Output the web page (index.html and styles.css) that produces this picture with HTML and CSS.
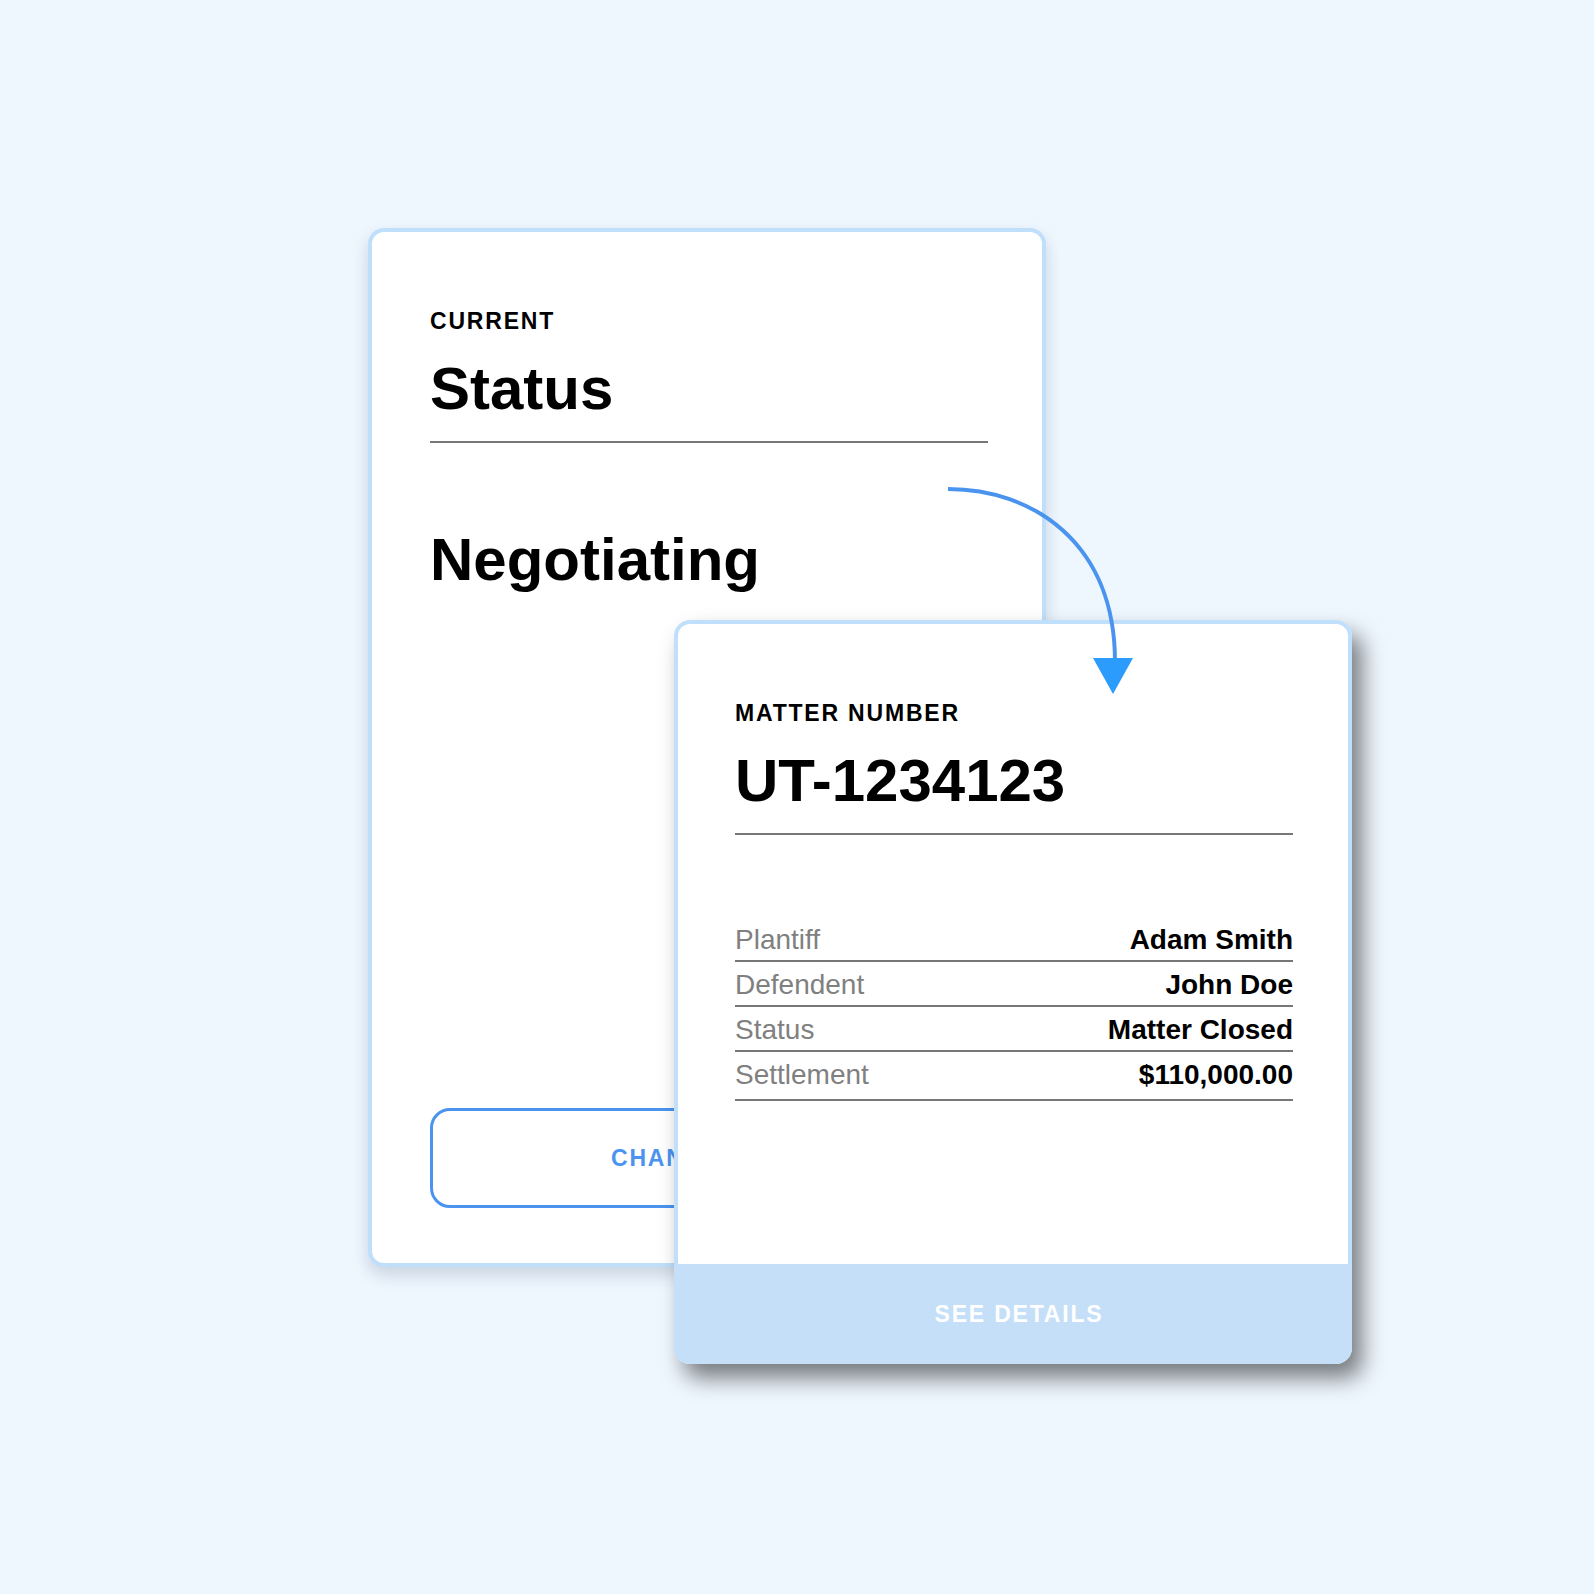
FILE: index.html
```html
<!DOCTYPE html>
<html lang="en">
<head>
  <meta charset="UTF-8" />
  <title>Matter Status</title>
  <meta name="viewport" content="width=device-width, initial-scale=1.0" />
  <link rel="stylesheet" href="styles.css">
</head>
<body>
  <div class="stage">
    <!-- status card, sits behind -->
    <div class="card card-back">
      <div class="eyebrow">CURRENT</div>
      <div class="title">Status</div>
      <div class="rule"></div>
      <div class="status-value">Negotiating</div>
      <button class="outline-btn">CHANGE STATUS</button>
    </div>

    <!-- matter card, on top -->
    <div class="card-front">
      <div class="front-body">
        <div class="eyebrow">MATTER NUMBER</div>
        <div class="title">UT-1234123</div>
        <div class="rule"></div>
        <div class="facts">
          <div class="fact"><span class="fact-label">Plantiff</span><span class="fact-value">Adam Smith</span></div>
          <div class="fact"><span class="fact-label">Defendent</span><span class="fact-value">John Doe</span></div>
          <div class="fact"><span class="fact-label">Status</span><span class="fact-value">Matter Closed</span></div>
          <div class="fact last"><span class="fact-label">Settlement</span><span class="fact-value">$110,000.00</span></div>
        </div>
      </div>
      <div class="front-footer">SEE DETAILS</div>
    </div>

    <svg class="flow-arrow" width="210" height="220" viewBox="930 480 210 220">
      <path d="M948 489 C1032 489 1115 542 1115 662" fill="none" stroke="#4a94ef" stroke-width="4" />
      <path d="M1093 658 L1133 658 L1113 694 Z" fill="#2b9bfc" />
    </svg>
  </div>
</body>
</html>
```

FILE: styles.css
```css
body {
  margin: 0;
  background: #eef6fe;
  font-family: "Liberation Sans", Arial, sans-serif;
  color: #000;
}

.stage {
  position: relative;
  width: 1594px;
  height: 1594px;
  box-sizing: border-box;
  padding: 228px 0 0 368px;
}

.card {
  width: 678px;
  height: 1039px;
  box-sizing: border-box;
  background: #fff;
  border: 4px solid #bfdffb;
  border-radius: 16px;
  box-shadow: 0 8px 16px rgba(40, 60, 90, 0.18);
  padding: 78px 54px 55px 58px;
  display: flex;
  flex-direction: column;
}

.eyebrow {
  font-size: 23px;
  line-height: 23px;
  font-weight: bold;
  letter-spacing: 1.8px;
}

.title {
  margin-top: 26px;
  font-size: 60px;
  line-height: 60px;
  font-weight: bold;
}

.rule {
  margin-top: 22px;
  height: 2px;
  background: #777;
}

.status-value {
  margin-top: 87px;
  font-size: 60px;
  line-height: 60px;
  font-weight: bold;
}

.outline-btn {
  margin-top: auto;
  height: 100px;
  width: 100%;
  padding: 0 0 0 22px;
  background: #fff;
  border: 3px solid #4a94ef;
  border-radius: 20px;
  color: #4a94ef;
  font-family: inherit;
  font-size: 23px;
  font-weight: bold;
  letter-spacing: 1.8px;
}

.card-front {
  position: absolute;
  left: 674px;
  top: 620px;
  width: 678px;
  height: 744px;
  display: flex;
  flex-direction: column;
  border-radius: 16px;
  box-shadow: 10px 14px 22px rgba(0, 0, 0, 0.5);
}

.front-body {
  flex: 1;
  background: #fff;
  border: 4px solid #bfdffb;
  border-bottom: none;
  border-radius: 16px 16px 0 0;
  padding: 78px 55px 0 57px;
}

.facts {
  margin-top: 82px;
}

.fact {
  display: flex;
  justify-content: space-between;
  align-items: baseline;
  padding: 6px 0 3px;
  line-height: 34px;
  font-size: 28px;
  border-bottom: 2px solid #777;
}

.fact.last {
  padding-bottom: 7px;
}

.fact-label {
  color: #808080;
}

.fact-value {
  font-weight: bold;
}

.front-footer {
  height: 100px;
  padding-left: 12px;
  background: #c4dff7;
  border-radius: 0 0 16px 16px;
  color: #fff;
  font-size: 23px;
  font-weight: bold;
  letter-spacing: 1.8px;
  display: flex;
  align-items: center;
  justify-content: center;
}

.flow-arrow {
  position: absolute;
  left: 930px;
  top: 480px;
}
```
